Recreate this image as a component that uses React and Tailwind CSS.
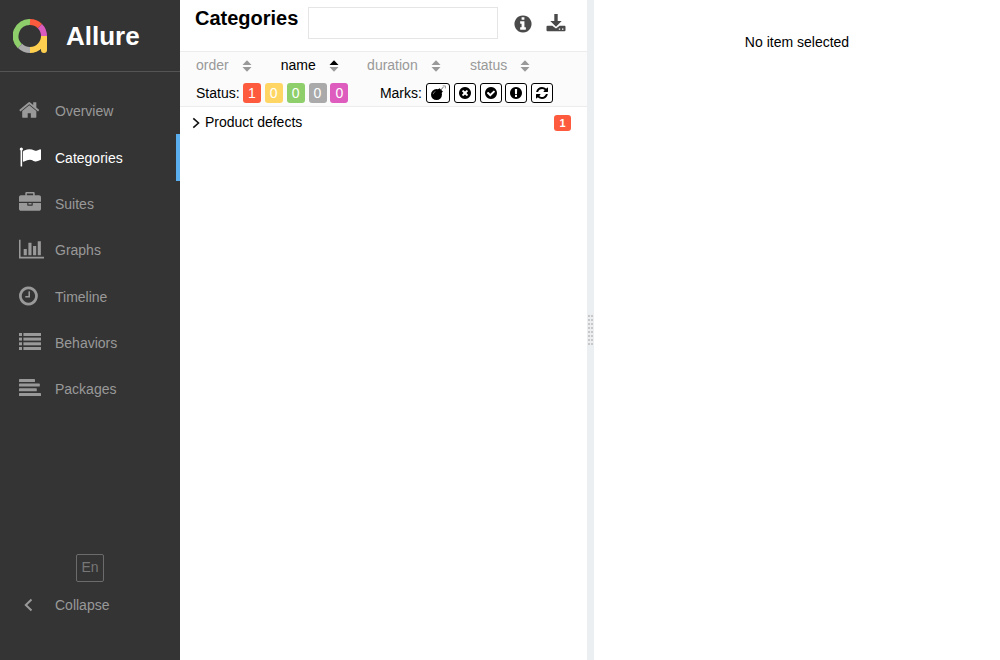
const disc = 'M1664 896q0 209-103 385.500t-279.500 279.500-385.500 103-385.500-103-279.500-279.500-103-385.500 103-385.500 279.500-279.500 385.500-103 385.500 103 279.500 279.500 103 385.500z';

const paths = {
  home: 'M1472 992v480q0 26-19 45t-45 19h-384v-384h-256v384h-384q-26 0-45-19t-19-45v-480q0-1 .5-3t.5-3l575-474 575 474q1 2 1 6zm223-69l-62 74q-8 9-21 11h-3q-13 0-21-7l-692-577-692 577q-12 8-24 7-13-2-21-11l-62-74q-8-10-7-23.500t11-21.500l719-599q32-26 76-26t76 26l244 204v-195q0-14 9-23t23-9h192q14 0 23 9t9 23v408l219 182q10 8 11 21.500t-7 23.500z',
  flag: 'M320 256q0 72-64 110v1266q0 13-9.500 22.500t-22.500 9.500h-64q-13 0-22.500-9.500t-9.500-22.500v-1266q-64-38-64-110 0-53 37.500-90.500t90.500-37.500 90.500 37.500 37.500 90.500zm1472 64v763q0 25-12.500 38.500t-39.500 27.500q-215 116-369 116-61 0-123.500-22t-108.500-48-115.500-48-142.500-22q-192 0-464 146-17 9-33 9-26 0-45-19t-19-45v-742q0-32 31-55 21-14 79-43 236-120 421-120 107 0 200 29t219 88q38 19 88 19 54 0 117.500-21t110-47 88-47 54.500-21q26 0 45 19t19 45z',
  briefcase: 'M640 256h512v-128h-512v128zm1152 640v480q0 66-47 113t-113 47h-1472q-66 0-113-47t-47-113v-480h672v160q0 26 19 45t45 19h320q26 0 45-19t19-45v-160h672zm-768 0v128h-256v-128h256zm768-480v384h-1792v-384q0-66 47-113t113-47h352v-160q0-40 28-68t68-28h576q40 0 68 28t28 68v160h352q66 0 113 47t47 113z',
  chart: 'M640 896v512h-256v-512h256zm384-512v1024h-256v-1024h256zm1024 1152v128h-2048v-1536h128v1408h1920zm-640-896v768h-256v-768h256zm384-384v1152h-256v-1152h256z',
  clock: 'M1024 544v448q0 14-9 23t-23 9h-320q-14 0-23-9t-9-23v-64q0-14 9-23t23-9h224v-352q0-14 9-23t23-9h64q14 0 23 9t9 23zm416 352q0-148-73-273t-198-198-273-73-273 73-198 198-73 273 73 273 198 198 273 73 273-73 198-198 73-273zm224 0q0 209-103 385.500t-279.500 279.500-385.500 103-385.500-103-279.500-279.500-103-385.500 103-385.500 279.500-279.500 385.500-103 385.500 103 279.500 279.500 103 385.500z',
  times: 'M1277 1122q0-26-19-45l-181-181 181-181q19-19 19-45 0-27-19-46l-90-90q-19-19-46-19-26 0-45 19l-181 181-181-181q-19-19-45-19-27 0-46 19l-90 90q-19 19-19 46 0 26 19 45l181 181-181 181q-19 19-19 45 0 27 19 46l90 90q19 19 46 19 26 0 45-19l181-181 181 181q19 19 45 19 27 0 46-19l90-90q19-19 19-46z' + disc,
  check: 'M1412 734q0-28-18-46l-91-90q-19-19-45-19t-45 19l-408 407-226-226q-19-19-45-19t-45 19l-91 90q-18 18-18 46 0 27 18 45l362 362q19 19 45 19 27 0 46-19l543-543q18-18 18-45z' + disc,
  bang: 'M1024 1375v-190q0-14-9-23.500t-22-9.500h-192q-13 0-23 10t-10 23v190q0 13 10 23t23 10h192q13 0 22-9.500t9-23.500zm-2-344l18-621q0-12-10-18-10-8-24-8h-220q-14 0-24 8-10 6-10 18l17 621q0 10 10 17.500t24 7.500h185q14 0 23.500-7.500t10.500-17.500z' + disc,
  info: 'M1152 1376v-160q0-14-9-23t-23-9h-96v-512q0-14-9-23t-23-9h-320q-14 0-23 9t-9 23v160q0 14 9 23t23 9h96v320h-96q-14 0-23 9t-9 23v160q0 14 9 23t23 9h448q14 0 23-9t9-23zm-128-896v-160q0-14-9-23t-23-9h-192q-14 0-23 9t-9 23v160q0 14 9 23t23 9h192q14 0 23-9t9-23z' + disc,
  refresh: 'M1639 1056q0 5-1 7-64 268-268 434.500t-478 166.500q-146 0-282.500-55t-243.500-157l-129 129q-19 19-45 19t-45-19-19-45v-448q0-26 19-45t45-19h448q26 0 45 19t19 45-19 45l-137 137q71 66 161 102t187 36q134 0 250-65t186-179q11-17 53-117 8-23 30-23h192q13 0 22.500 9.500t9.500 22.500zm25-800v448q0 26-19 45t-45 19h-448q-26 0-45-19t-19-45 19-45l138-138q-148-137-349-137-134 0-250 65t-186 179q-11 17-53 117-8 23-30 23h-199q-13 0-22.500-9.500t-9.500-22.500v-7q65-268 270-434.500t480-166.500q146 0 284 55.500t245 156.500l130-129q19-19 45-19t45 19 19 45z',
};

function Glyph({ name, viewBox = '0 0 1792 1792', className }) {
  return (
    <svg viewBox={viewBox} className={className} fill="currentColor" fillRule="evenodd">
      <path d={paths[name]} />
    </svg>
  );
}

const ListIcon = () => (
  <svg viewBox="0 0 22 22" className="size-[22px]" fill="currentColor">
    {[2, 6.6, 11.3, 16].map((y) => (
      <g key={y}>
        <rect x="0" y={y} width="3" height="3" />
        <rect x="4.400" y={y} width="17.600" height="3" />
      </g>
    ))}
  </svg>
);

const AlignIcon = () => (
  <svg viewBox="0 0 22 22" className="size-[22px]" fill="currentColor">
    <rect x="0" y="2" width="16" height="3" rx=".6" />
    <rect x="0" y="6.600" width="20.800" height="3" rx=".6" />
    <rect x="0" y="11.300" width="17.800" height="3" rx=".6" />
    <rect x="0" y="16" width="22" height="3" rx=".6" />
  </svg>
);

const items = [
  { label: 'Overview', row: 'h-[46px]', pad: 'pt-[11px]', icon: <Glyph name="home" viewBox="60 0 1792 1792" className="size-[22px]" /> },
  { label: 'Categories', row: 'h-[47px]', pad: 'pt-3', active: true, icon: <Glyph name="flag" className="size-[22px]" /> },
  { label: 'Suites', row: 'h-[46px]', pad: 'pt-[11px]', icon: <Glyph name="briefcase" className="size-[22px]" /> },
  { label: 'Graphs', row: 'h-[46px]', pad: 'pt-[11px]', icon: <Glyph name="chart" viewBox="0 0 2048 1792" className="h-[22px] w-[25px]" /> },
  { label: 'Timeline', row: 'h-[47px]', pad: 'pt-3', icon: <Glyph name="clock" viewBox="128 0 1792 1792" className="size-[22px]" /> },
  { label: 'Behaviors', row: 'h-[46px]', pad: 'pt-[11px]', icon: <ListIcon /> },
  { label: 'Packages', row: 'h-[46px]', pad: 'pt-[11px]', icon: <AlignIcon /> },
];

function Logo() {
  return (
    <svg viewBox="0 0 34 34" className="size-[34px]" fill="none" strokeWidth="6">
      <path d="M6.900 27.100A14 14 0 0 1 17 3" stroke="#8fcf6b" />
      <path d="M17 3A14 14 0 0 1 26.900 7.100" stroke="#fd5a3e" />
      <path d="M26.900 7.100A14 14 0 0 1 31 17" stroke="#d95bbd" />
      <path d="M17 31A14 14 0 0 1 7.100 26.900" stroke="#aaaaaa" />
      <path d="M31 17A14 14 0 0 1 17 31" stroke="#ffd050" />
      <path d="M31 17V31" stroke="#ffd050" />
      <circle cx="31" cy="31" r="3" fill="#ffd050" stroke="none" />
    </svg>
  );
}

function Sidebar() {
  return (
    <aside className="flex h-full w-[180px] shrink-0 flex-col bg-[#343434] text-[#999]">
      <div className="flex h-[72px] items-center gap-[19px] border-b border-[#545454] pl-[13px]">
        <Logo />
        <span className="text-[26px] font-bold leading-[30px] text-white">Allure</span>
      </div>
      <nav className="pt-4">
        {items.map((it) => (
          <a key={it.label} className={`flex pl-[19px] ${it.row} ${it.active ? 'border-r-4 border-[#5aaeed] text-white' : ''}`}>
            <span className={`w-9 ${it.pad}`}>{it.icon}</span>
            <span className="self-center">{it.label}</span>
          </a>
        ))}
      </nav>
      <div className="mt-auto flex flex-col">
        <button className="ml-[76px] size-7 rounded-[2px] border border-[#6b6b6b] pb-0.5 text-[#777]">En</button>
        <div className="flex h-[46px] items-center pl-6">
          <svg viewBox="0 0 9 14" className="mr-[22px] h-[14px] w-[9px]" fill="none" stroke="currentColor" strokeWidth="2">
            <path d="M7.500 1.500L1.800 7L7.500 12.500" />
          </svg>
          <span>Collapse</span>
        </div>
        <div className="h-8" />
      </div>
    </aside>
  );
}

function Sorter({ label, width, active }) {
  return (
    <div className={`flex items-center gap-[13px] ${width} ${active ? 'text-black' : 'text-[#999]'}`}>
      <span>{label}</span>
      <svg viewBox="0 0 10 12" className="mt-0.5 h-3 w-[10px]">
        <path d="M.5 5L5 .3L9.500 5z" fill="currentColor" />
        <path d="M.5 7L5 11.700L9.500 7z" fill="#999" />
      </svg>
    </div>
  );
}

const statuses = [
  ['1', 'bg-[#fd5a3e]'],
  ['0', 'bg-[#ffd663]'],
  ['0', 'bg-[#8fcf6b]'],
  ['0', 'bg-[#aaaaaa]'],
  ['0', 'bg-[#dd5cbd]'],
];

function Bomb() {
  return (
    <svg viewBox="0 0 16 16" className="size-4">
      <circle cx="6.500" cy="9.600" r="5.500" fill="#000" />
      <path d="M7.500 4.800L9.500 3.200L12.900 6.500L11.300 8.300z" fill="#000" />
      <path d="M11 5.200Q11.800 2.800 13.500 2.300" fill="none" stroke="#666" strokeWidth=".9" />
      <path d="M12.700 .9H15.400V3.400" fill="none" stroke="#999" strokeWidth="1" />
      <path d="M3.200 9.200Q3.500 7.200 5.400 6.500" fill="none" stroke="#999" strokeWidth=".7" />
    </svg>
  );
}

function Mark({ children, width = 'w-[21.9px]' }) {
  return <span className={`flex h-5 items-center justify-center rounded-[3px] border border-black bg-white text-black ${width}`}>{children}</span>;
}

function Categories() {
  return (
    <section className="flex h-full w-[407px] shrink-0 flex-col bg-white">
      <header className="flex h-[51px] items-start pl-[15px]">
        <h1 className="pt-1.5 text-[20px] font-bold leading-6">Categories</h1>
        <input className="ml-[10px] mt-[7px] h-8 w-[190px] border border-[#e5e5e5] bg-white" />
        <Glyph name="info" className="ml-[15px] mt-[13.5px] size-5 text-[#4a4a4a]" />
        <svg viewBox="0 0 20 18" className="ml-[12.5px] mt-[14px] h-[18px] w-5 text-[#4a4a4a]" fill="currentColor">
          <path d="M8.300 0h3.400v7h4L10 12.700L4.300 7h4z" />
          <path fillRule="evenodd" d="M1.500 11.700h4.800l3.700 2.700l3.700-2.700h4.800q1 0 1 1v3.600q0 1-1 1h-17q-1 0-1-1v-3.600q0-1 1-1zM12.800 14.500v1.200h1.400v-1.200zM16 14.500v1.200h1.400v-1.200z" />
        </svg>
      </header>
      <div className="h-14 border-y border-[#ececec] bg-[#fbfbfb] pl-4">
        <div className="flex h-[26px] items-center">
          <Sorter label="order" width="w-[84.800px]" />
          <Sorter label="name" width="w-[86.300px]" active />
          <Sorter label="duration" width="w-[102.800px]" />
          <Sorter label="status" width="w-[80px]" />
        </div>
        <div className="mt-px flex h-7 items-center">
          <span className="w-[46.9px]">Status:</span>
          <div className="flex gap-[3.89px]">
            {statuses.map(([n, bg], i) => (
              <span key={i} className={`h-5 w-[18px] rounded-[3px] text-center leading-5 text-white ${bg}`}>{n}</span>
            ))}
          </div>
          <span className="ml-[31.5px] w-[46.1px]">Marks:</span>
          <div className="flex gap-[3.89px]">
            <Mark width="w-[24.1px]"><Bomb /></Mark>
            <Mark><Glyph name="times" className="size-[14px]" /></Mark>
            <Mark><Glyph name="check" className="size-[14px]" /></Mark>
            <Mark><Glyph name="bang" className="size-[14px]" /></Mark>
            <Mark><Glyph name="refresh" className="size-[14px]" /></Mark>
          </div>
        </div>
      </div>
      <div className="flex h-[30px] items-center pl-3 pr-4">
        <svg viewBox="0 0 8 12" className="mr-[5px] mt-0.5 h-3 w-2" fill="none" stroke="#111" strokeWidth="1.600">
          <path d="M1.300 1.300L6.500 6L1.300 10.700" />
        </svg>
        <span>Product defects</span>
        <span className="ml-auto mt-0.5 h-4 w-[17px] rounded-[3px] bg-[#fd5a3e] text-center text-[11px] font-bold leading-4 text-white">1</span>
      </div>
    </section>
  );
}

export default function App() {
  return (
    <div className="flex h-[660px] w-[1000px] overflow-hidden bg-white font-['Liberation_Sans',Arial,sans-serif] text-[14px] leading-5 text-black">
      <Sidebar />
      <Categories />
      <div className="flex w-[7px] shrink-0 items-center justify-center bg-[#eceff1]">
        <div className="grid grid-cols-[2px_2px] gap-x-px gap-y-[2px]">
          {Array.from({ length: 16 }, (_, i) => (
            <i key={i} className="size-[2px] bg-[#c8c8c8]" />
          ))}
        </div>
      </div>
      <main className="flex-1 pt-8 text-center">No item selected</main>
    </div>
  );
}
